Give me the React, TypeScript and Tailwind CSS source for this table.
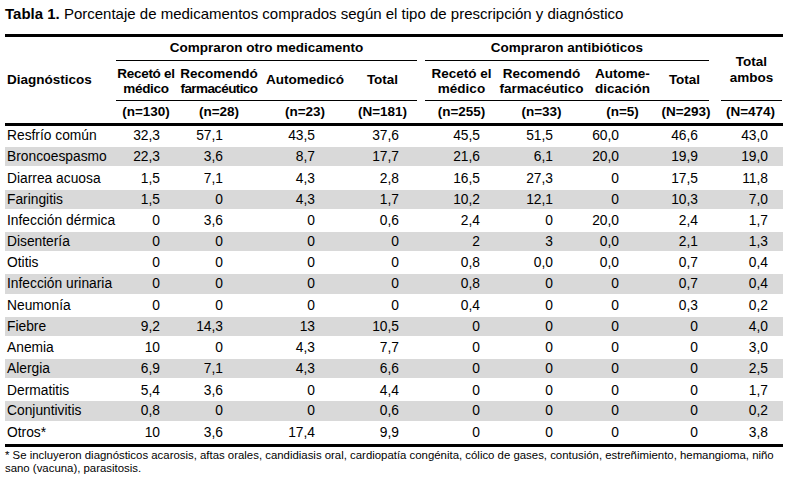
import React from 'react';

const grid = 'grid grid-cols-[111px_60px_86px_86px_69px_81px_87px_75px_52px_71px]';

// right padding of each data column, so the numbers line up like the Word table
const pads = [
  'pr-[16px]',
  'pr-[39px]',
  'pr-[33px]',
  'pr-[18px]',
  'pr-[18px]',
  'pr-[32px]',
  'pr-[41px]',
  'pr-[14px]',
  'pr-[15px]',
];

const rows: string[][] = [
  ['Resfrío común', '32,3', '57,1', '43,5', '37,6', '45,5', '51,5', '60,0', '46,6', '43,0'],
  ['Broncoespasmo', '22,3', '3,6', '8,7', '17,7', '21,6', '6,1', '20,0', '19,9', '19,0'],
  ['Diarrea acuosa', '1,5', '7,1', '4,3', '2,8', '16,5', '27,3', '0', '17,5', '11,8'],
  ['Faringitis', '1,5', '0', '4,3', '1,7', '10,2', '12,1', '0', '10,3', '7,0'],
  ['Infección dérmica', '0', '3,6', '0', '0,6', '2,4', '0', '20,0', '2,4', '1,7'],
  ['Disentería', '0', '0', '0', '0', '2', '3', '0,0', '2,1', '1,3'],
  ['Otitis', '0', '0', '0', '0', '0,8', '0,0', '0,0', '0,7', '0,4'],
  ['Infección urinaria', '0', '0', '0', '0', '0,8', '0', '0', '0,7', '0,4'],
  ['Neumonía', '0', '0', '0', '0', '0,4', '0', '0', '0,3', '0,2'],
  ['Fiebre', '9,2', '14,3', '13', '10,5', '0', '0', '0', '0', '4,0'],
  ['Anemia', '10', '0', '4,3', '7,7', '0', '0', '0', '0', '3,0'],
  ['Alergia', '6,9', '7,1', '4,3', '6,6', '0', '0', '0', '0', '2,5'],
  ['Dermatitis', '5,4', '3,6', '0', '4,4', '0', '0', '0', '0', '1,7'],
  ['Conjuntivitis', '0,8', '0', '0', '0,6', '0', '0', '0', '0', '0,2'],
  ['Otros*', '10', '3,6', '17,4', '9,9', '0', '0', '0', '0', '3,8'],
];

const ns = ['(n=130)', '(n=28)', '(n=23)', '(N=181)', '(n=255)', '(n=33)', '(n=5)', '(N=293)', '(N=474)'];

const App: React.FC = () => {
  return (
    <div className="min-h-screen bg-white px-[5px] pt-[4px] text-black font-['Liberation_Sans',Arial,sans-serif]">
      {/* Title */}
      <p className="text-[15px] leading-[20px] mb-[10px]">
        <span className="font-bold">Tabla 1.</span> Porcentaje de medicamentos comprados según el tipo de
        prescripción y diagnóstico
      </p>

      {/* Header */}
      <div
        className={`${grid} grid-rows-[24px_40px_22px] border-y-[3px] border-black text-[13.5px] font-bold whitespace-nowrap`}
      >
        <div className="row-span-3 flex items-center pl-[2px]">Diagnósticos</div>
        <div className="col-span-4 flex items-center justify-center border-b border-black">
          Compraron otro medicamento
        </div>
        <div className="col-span-4 ml-2 mr-[3px] flex items-center justify-center border-b border-black">
          Compraron antibióticos
        </div>
        <div className="row-span-2 ml-[9px] mr-[1px] flex items-center justify-center border-b border-black text-center leading-[16px] pt-[2px]">
          Total
          <br />
          ambos
        </div>

        <div className="flex items-center justify-center border-b border-black text-center leading-[15px] tracking-[-0.3px]">
          Recetó el
          <br />
          médico
        </div>
        <div className="flex items-center justify-center border-b border-black text-center leading-[15px]">
          <span>
            Recomendó
            <br />
            <span className="tracking-[-0.6px]">farmacéutico</span>
          </span>
        </div>
        <div className="flex items-center justify-center border-b border-black">Automedicó</div>
        <div className="flex items-center justify-center border-b border-black">Total</div>
        <div className="ml-2 flex items-center justify-center border-b border-black text-center leading-[15px]">
          Recetó el
          <br />
          médico
        </div>
        <div className="flex items-center justify-center border-b border-black text-center leading-[15px]">
          Recomendó
          <br />
          farmacéutico
        </div>
        <div className="flex items-center justify-center border-b border-black text-center leading-[15px]">
          Autome-
          <br />
          dicación
        </div>
        <div className="mr-[3px] flex items-center justify-center border-b border-black">Total</div>

        {ns.map((n, i) => (
          <div key={n} className={`flex items-center justify-center ${i === 4 ? 'pl-2' : ''} ${i === 8 ? 'pl-[6px]' : ''}`}>
            {n}
          </div>
        ))}
      </div>

      {/* Body */}
      <div className="border-b-[3px] border-black text-[13.8px]">
        {rows.map((r, idx) => (
          <div
            key={r[0]}
            className={`${grid} h-[21.2px] items-center ${idx % 2 === 1 ? 'bg-[#d9d9d9] border-b-2 border-white' : ''}`}
          >
            <div className="pl-[2px] whitespace-nowrap">{r[0]}</div>
            {r.slice(1).map((v, j) => (
              <div key={j} className={`text-right ${pads[j]}`}>
                {v}
              </div>
            ))}
          </div>
        ))}
      </div>

      {/* Footnote */}
      <p className="mt-[2px] text-[11.4px] leading-[13px]">
        * Se incluyeron diagnósticos acarosis, aftas orales, candidiasis oral, cardiopatía congénita, cólico de
        gases, contusión, estreñimiento, hemangioma, niño sano (vacuna), parasitosis.
      </p>
    </div>
  );
};

export default App;
